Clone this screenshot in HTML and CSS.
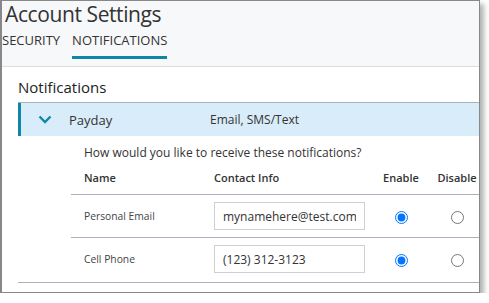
FILE: index.html
```html
<!DOCTYPE html>
<html lang="en">
<head>
    <meta charset="UTF-8">
    <title>Account Settings</title>
    <link rel="stylesheet" href="styles.css">
</head>
<body>
    <div class="frame">
        <div class="header">
            <h1>Account Settings</h1>
            <div class="tabs">
                <span class="tab">Security</span>
                <span class="tab active">Notifications</span>
            </div>
        </div>
        <div class="panel">
            <h2>Notifications</h2>
            <div class="group">
                <div class="group-head">
                    <svg class="chevron" width="14" height="9" viewBox="0 0 14 9">
                        <path d="M1.5 1.5 L7 7 L12.5 1.5" fill="none" stroke="#1386a6" stroke-width="2.4"/>
                    </svg>
                    <span class="group-name">Payday</span>
                    <span class="group-channels">Email, SMS/Text</span>
                </div>
                <div class="group-body">
                    <p class="question">How would you like to receive these notifications?</p>
                    <div class="grid head">
                        <span>Name</span>
                        <span>Contact Info</span>
                        <span class="center">Enable</span>
                        <span class="center">Disable</span>
                    </div>
                    <div class="grid row">
                        <span class="label">Personal Email</span>
                        <span><input type="text" class="contact" value="mynamehere@test.com"></span>
                        <span class="center"><input type="radio" name="email" checked></span>
                        <span class="center"><input type="radio" name="email"></span>
                    </div>
                    <div class="grid row last">
                        <span class="label">Cell Phone</span>
                        <span><input type="text" class="contact" value="(123) 312-3123"></span>
                        <span class="center"><input type="radio" name="phone" checked></span>
                        <span class="center"><input type="radio" name="phone"></span>
                    </div>
                </div>
            </div>
        </div>
    </div>
</body>
</html>
```

FILE: styles.css
```css
body {
    margin: 0;
    background-color: #fff;
    font-family: "Open Sans", sans-serif;
    color: #333;
}
.frame {
    width: 477px;
    height: 291px;
    border: 1px solid #888;
    border-left-width: 2px;
    box-shadow: 4px 4px 5px rgba(0,0,0,0.3);
    overflow: hidden;
    background-color: #fff;
}
.header {
    background-color: #f7f8fa;
    height: 65px;
    border-bottom: 1px solid #dedede;
}
.header h1 {
    margin: 0;
    padding: 0 0 0 3px;
    font-size: 21px;
    letter-spacing: -0.4px;
    font-weight: 400;
    line-height: 26px;
    color: #333;
}
.tabs {
    display: flex;
    gap: 12px;
    margin-top: 4px;
}
.tab {
    text-transform: uppercase;
    font-size: 13px;
    line-height: 18px;
    padding-bottom: 7px;
    border-bottom: 3px solid transparent;
    color: #333;
}
.tab.active {
    border-bottom-color: #0e87a6;
}
.panel {
    padding-left: 16px;
}
.panel h2 {
    margin: 0;
    padding-top: 9px;
    font-size: 15px;
    font-weight: 400;
    line-height: 22px;
    color: #222;
    height: 26px;
}
.group {
    border-top: 1px solid #a9b3bd;
    border-bottom: 1px solid #a9b3bd;
}
.group-head {
    display: flex;
    align-items: center;
    height: 33px;
    background-color: #d9ecfa;
    border-left: 3px solid #0e87a6;
    font-size: 13px;
}
.chevron {
    margin-left: 17px;
    margin-right: 17px;
}
.group-name {
    width: 141px;
}
.group-channels {
    font-size: 12px;
}
.group-body {
    padding-left: 53px;
    padding-bottom: 2px;
}
.question {
    margin: 0;
    padding: 9px 0 0 13px;
    font-size: 12px;
    line-height: 16px;
}
.grid {
    display: grid;
    grid-template-columns: 143px 158px 58px 54px;
    align-items: center;
    border-bottom: 1px solid #a9b3bd;
}
.grid.last {
    border-bottom: none;
}
.grid span:first-child {
    padding-left: 13px;
}
.head {
    height: 33px;
    font-size: 11px;
    font-weight: 600;
    color: #333;
}
.row {
    height: 42px;
}
.label {
    font-size: 10.3px;
    color: #444;
}
.center {
    text-align: center;
}
.contact {
    box-sizing: border-box;
    width: 151px;
    height: 28px;
    border: 1px solid #d0d0d0;
    padding: 0 8px;
    font-family: "Open Sans", sans-serif;
    font-size: 12px;
    color: #333;
    display: block;
}
input[type="radio"] {
    margin: 0;
    vertical-align: middle;
}
```
